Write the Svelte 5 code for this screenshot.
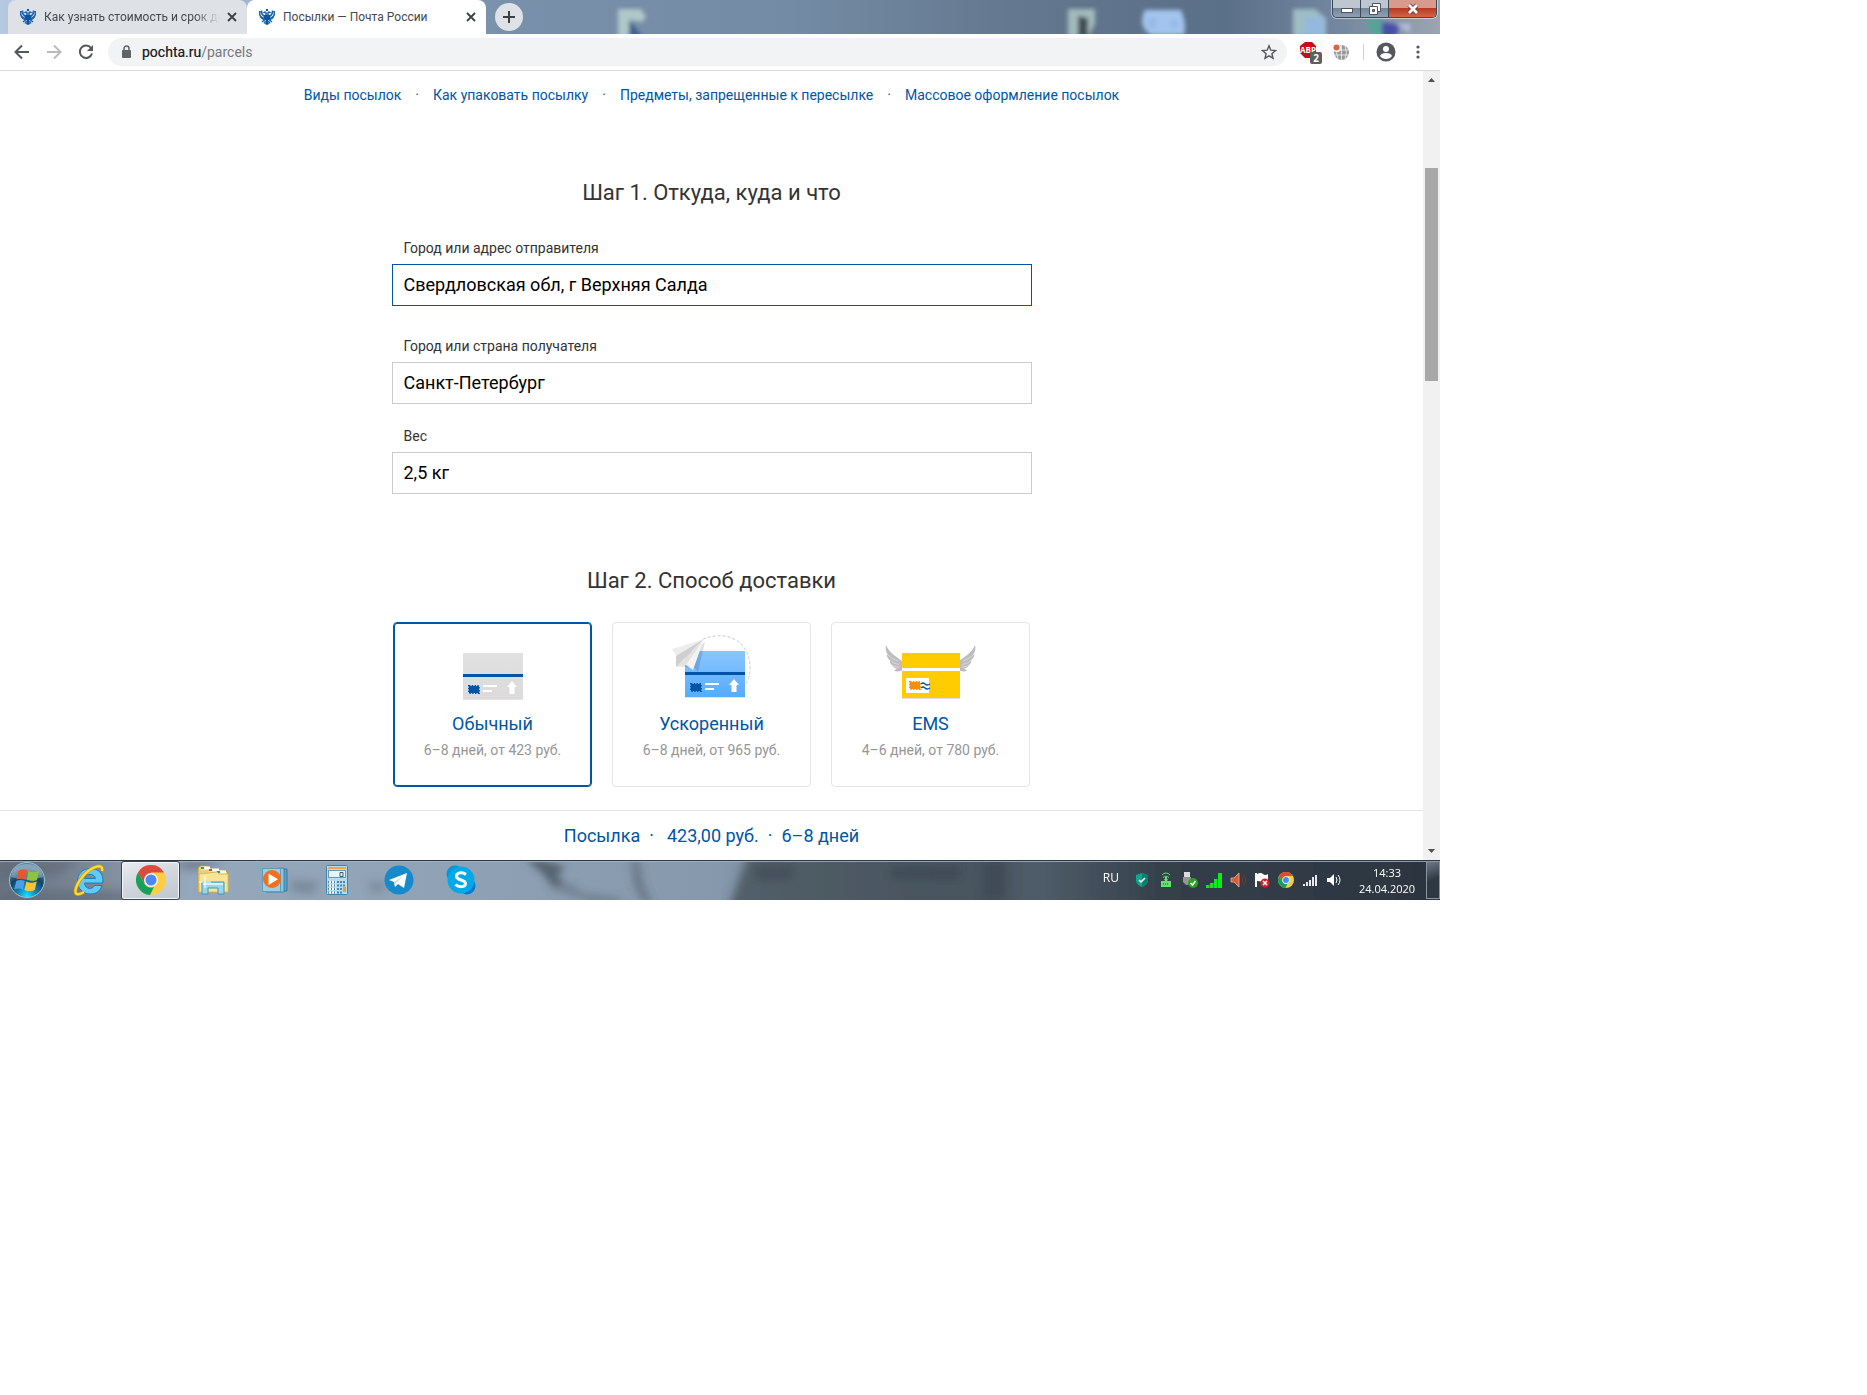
<script lang="ts">
    const links = [
        "Виды посылок",
        "Как упаковать посылку",
        "Предметы, запрещенные к пересылке",
        "Массовое оформление посылок",
    ];

    const methods = [
        { id: "regular", title: "Обычный", terms: "6–8 дней, от 423 руб." },
        { id: "fast", title: "Ускоренный", terms: "6–8 дней, от 965 руб." },
        { id: "ems", title: "EMS", terms: "4–6 дней, от 780 руб." },
    ];

    const apps = ["Internet Explorer", "Chrome", "Проводник", "Проигрыватель", "Калькулятор", "Telegram", "Skype"];
    const tray = ["shield", "modem", "usb", "bars", "sound-off", "flag", "chrome", "signal", "volume"];

    let url = $state("pochta.ru/parcels");
    let from = $state("Свердловская обл, г Верхняя Салда");
    let to = $state("Санкт-Петербург");
    let weight = $state("2,5 кг");
    let method = $state("regular");
</script>

{#snippet eagle()}
    <svg class="favicon" viewBox="0 0 16 16" aria-hidden="true">
        <g fill="none" stroke="#1a63ae">
            <path d="M.7 2v3q.3 3 4.300 4.500M2.500 1.500q-.3 4 3 6M15.300 2v3q-.3 3-4.300 4.500M13.500 1.500q.3 4-3 6" stroke-width="1.600" />
            <path d="M1.500 7.500q1 2.500 4 3.300M14.500 7.500q-1 2.500-4 3.300" stroke-width="1.300" />
            <path d="M4.500 4q2-2 2.500 0v3M11.500 4q-2-2-2.500 0v3" stroke-width="1.600" />
            <path d="M6 10.500L3 13M10 10.500l3 2.500M6.500 12L5 14.500M9.500 12l1.500 2.500" stroke-width="1.400" />
        </g>
        <path d="M7 0h2v2H7zM5 6h6v4L8 12.500 5 10zM7 11.500h2L10 15l-2 1-2-1z" fill="#0a56a5" />
    </svg>
{/snippet}

{#snippet cross()}
    <svg width="10" height="10" viewBox="0 0 10 10" aria-hidden="true">
        <path d="M1 1l8 8M9 1L1 9" stroke="#3c4043" stroke-width="1.800" />
    </svg>
{/snippet}

{#snippet chrome(size: number)}
    <svg width={size} height={size} viewBox="0 0 30 30" aria-hidden="true">
        <circle cx="15" cy="15" r="15" fill="#ffcd41" />
        <path d="M2 7.500A15 15 0 0 1 28 7.500H15L8.500 18.800z" fill="#db4a3f" />
        <path d="M2 7.500L8.500 18.800A7.500 7.500 0 0 0 18 21.900L14 30A15 15 0 0 1 2 7.500z" fill="#17a05d" />
        <circle cx="15" cy="15" r="7" fill="#f1f1f1" />
        <circle cx="15" cy="15" r="5.500" fill="#4a8af4" />
    </svg>
{/snippet}

{#snippet stamp(x: number, y: number, fill: string)}
    <rect {x} {y} width="10" height="7" {fill} />
    <rect {x} {y} width="10" height="7" fill="none" stroke={fill} stroke-width="2" stroke-dasharray="1.400 1.400" />
{/snippet}

{#snippet parcel(x: number, y: number, gradient: string)}
    <rect {x} y={y + 1} width="60" height="46" fill="#000" opacity=".1" />
    <rect {x} {y} width="60" height="46" fill="url(#{gradient})" />
    <rect {x} y={y + 21} width="60" height="3" fill="#0055a6" />
    {@render stamp(x + 6, y + 33, "#0055a6")}
    <path d="M{x + 20} {y + 33}h14M{x + 20} {y + 38}h9" stroke="#fff" stroke-width="2" />
    <path d="M{x + 49} {y + 28}l5 6h-2.500v7h-5v-7H{x + 44}z" fill="#fff" />
{/snippet}

{#snippet wing()}
    <path d="M95 15c1 4 0 7-2 10l1.500-.5c-.5 3-2 5-4.500 6.500h1.500c-.5 2.500-2 4-4 5h1c-1 1.500-2.500 2.300-4.500 2.500l3 2c-2 1.500-5 1-8 0V31c5-4 13-8 16-16z" />
    <path d="M93 25c-3 3-7 5-10 6M90 31c-2 2-5 3-8 3.500M87.500 36c-2 1-4 1-6 1" fill="none" stroke="#e6e6e6" stroke-width=".7" />
{/snippet}

<div class="screen">
    <header class="tabs">
        <svg class="wallpaper" viewBox="0 0 1440 34" preserveAspectRatio="none" aria-hidden="true">
            <defs>
                <linearGradient id="top">
                    <stop offset="0" stop-color="#b5cae1" />
                    <stop offset=".2" stop-color="#9db4d0" />
                    <stop offset=".35" stop-color="#7990ab" />
                    <stop offset=".55" stop-color="#748ba5" />
                    <stop offset=".7" stop-color="#64798f" />
                    <stop offset=".85" stop-color="#5a6f88" />
                    <stop offset=".93" stop-color="#7487a0" />
                    <stop offset="1" stop-color="#9ba5af" />
                </linearGradient>
                <filter id="soft"><feGaussianBlur stdDeviation="2" /></filter>
            </defs>
            <rect width="1440" height="34" fill="url(#top)" />
            <g filter="url(#soft)">
                <path d="M618 9h23l5 8-4 5-12-2v17h-12z" fill="#afc9c9" />
                <path d="M629 20l14 17h-14z" fill="#3d618e" />
                <path d="M1068 9h27v15l-7 13h-20z" fill="#a3babb" />
                <path d="M1078 16l10 2v19h-10z" fill="#3f5053" />
                <path d="M1145 10h36q6 14 3 25h-33q-14-9-6-25z" fill="#a3c4ee" />
                <path d="M1148 18h8v10h-8zM1170 20h8v7h-8z" fill="#96b9e8" />
                <path d="M1293 9h22l11 9v19h-33z" fill="#9fbdc4" />
                <path d="M1305 16h19v21h-19z" fill="#94b9de" />
                <path d="M1365 18h16l6 18h-16z" fill="#59a29b" />
                <path d="M1382 22l18 3-4 12h-14z" fill="#4a50a8" />
                <path d="M1396 24h14v9z" fill="#b7bfe1" />
            </g>
        </svg>
        <button class="tab">
            {@render eagle()}
            <span class="tab-title faded">Как узнать стоимость и срок до</span>
            {@render cross()}
        </button>
        <button class="tab active">
            {@render eagle()}
            <span class="tab-title">Посылки — Почта России</span>
            {@render cross()}
        </button>
        <button class="new-tab" aria-label="Новая вкладка">
            <svg width="14" height="14" viewBox="0 0 14 14" aria-hidden="true">
                <path d="M7 1v12M1 7h12" stroke="#3c4043" stroke-width="2" />
            </svg>
        </button>
        <div class="window-buttons">
            <button aria-label="Свернуть">
                <svg width="12" height="8" viewBox="0 0 12 8" aria-hidden="true">
                    <rect x=".5" y="3.500" width="11" height="4" fill="#fff" stroke="#4d5360" />
                </svg>
            </button>
            <button aria-label="Восстановить">
                <svg width="12" height="12" viewBox="0 0 12 12" aria-hidden="true">
                    <path d="M3.500.5h8v8h-8z" fill="#fff" stroke="#4d5360" />
                    <path d="M.5 3.500h8v8h-8z" fill="#fff" stroke="#4d5360" />
                    <path d="M3.500 6.500h2v2h-2z" fill="#7a8797" stroke="#4d5360" />
                </svg>
            </button>
            <button class="close" aria-label="Закрыть">
                <svg width="14" height="12" viewBox="0 0 14 12" aria-hidden="true">
                    <path d="M3 2l8 8M11 2l-8 8" stroke="#5b3a3a" stroke-width="4.500" />
                    <path d="M3 2l8 8M11 2l-8 8" stroke="#fff" stroke-width="2.800" />
                </svg>
            </button>
        </div>
    </header>

    <div class="toolbar">
        <button class="tool" aria-label="Назад">
            <svg width="16" height="16" viewBox="0 0 16 16" aria-hidden="true">
                <path d="M15 8H2M8 1.500L1.500 8 8 14.500" fill="none" stroke="#54575b" stroke-width="2" />
            </svg>
        </button>
        <button class="tool" aria-label="Вперед">
            <svg width="16" height="16" viewBox="0 0 16 16" aria-hidden="true">
                <path d="M1 8h13M8 1.500L14.500 8 8 14.500" fill="none" stroke="#b9bbbe" stroke-width="2" />
            </svg>
        </button>
        <button class="tool" aria-label="Обновить">
            <svg width="16" height="16" viewBox="0 0 16 16" aria-hidden="true">
                <path d="M13 4A6.200 6.200 0 1 0 14 9.500" fill="none" stroke="#54575b" stroke-width="2" />
                <path d="M15 1v6H9z" fill="#54575b" />
            </svg>
        </button>
        <div class="omnibox">
            <svg width="10" height="14" viewBox="0 0 10 14" aria-hidden="true">
                <rect x="1" y="5" width="9" height="8" rx="1" fill="#5f6368" />
                <path d="M3 5.500V3.500a2.500 2.500 0 0 1 5 0v2" fill="none" stroke="#5f6368" stroke-width="1.500" />
            </svg>
            <div class="url">
                <input aria-label="Адресная строка" bind:value={url} />
                <span aria-hidden="true">pochta.ru</span>
            </div>
            <button aria-label="Добавить в закладки">
                <svg width="16" height="16" viewBox="0 0 16 16" aria-hidden="true">
                    <path d="M8 1.800l1.800 4.400 4.700.4-3.600 3.100 1.100 4.600L8 11.800l-4 2.500 1.100-4.600-3.600-3.100 4.700-.4z" fill="none" stroke="#54575b" stroke-width="1.400" />
                </svg>
            </button>
        </div>
        <button class="extension" aria-label="AdBlock Plus">
            <svg width="24" height="24" viewBox="0 0 24 24" aria-hidden="true">
                <path d="M6 2h7l4 4v7l-4 5H6l-5-5V6z" fill="#c70d17" />
                <text x="9" y="13" text-anchor="middle" font-size="8" font-weight="700" fill="#fff">ABP</text>
                <rect x="11" y="12" width="12" height="12" rx="2" fill="#5e5f61" />
                <text x="17" y="22" text-anchor="middle" font-size="10" font-weight="700" fill="#fff">2</text>
            </svg>
        </button>
        <button class="extension" aria-label="Расширение">
            <svg width="16" height="16" viewBox="0 0 16 16" aria-hidden="true">
                <circle cx="8.500" cy="8.500" r="7.500" fill="#999" />
                <path d="M1 6h15M1 11h15M8.500 1v15M5 2q-3 6.500 0 13M12 2q3 6.500 0 13" stroke="#fff" stroke-width=".7" fill="none" />
                <circle cx="4" cy="4" r="4" fill="#fff" />
                <circle cx="3.500" cy="3.500" r="3" fill="#d9633a" />
            </svg>
        </button>
        <span class="divider"></span>
        <button class="profile" aria-label="Профиль">
            <svg width="20" height="20" viewBox="0 0 20 20" aria-hidden="true">
                <circle cx="10" cy="10" r="9.500" fill="#54575b" />
                <circle cx="10" cy="7" r="3" fill="#fff" />
                <path d="M4 14q1-3 6-3t6 3q-2 3-6 3t-6-3z" fill="#fff" />
            </svg>
        </button>
        <button class="menu" aria-label="Меню">
            <svg width="4" height="14" viewBox="0 0 4 14" fill="#54575b" aria-hidden="true">
                <circle cx="2" cy="2" r="1.600" />
                <circle cx="2" cy="7" r="1.600" />
                <circle cx="2" cy="12" r="1.600" />
            </svg>
        </button>
    </div>

    <div class="viewport">
        <main>
            <nav>
                {#each links as link, i}
                    {#if i > 0}<span>·</span>{/if}
                    <a href="#{i}">{link}</a>
                {/each}
            </nav>

            <section class="form">
                <h2>Шаг 1. Откуда, куда и что</h2>
                <div class="field current">
                    <label for="from">Город или адрес отправителя</label>
                    <input id="from" bind:value={from} />
                </div>
                <div class="field">
                    <label for="to">Город или страна получателя</label>
                    <input id="to" bind:value={to} />
                </div>
                <div class="field">
                    <label for="weight">Вес</label>
                    <input id="weight" bind:value={weight} />
                </div>
            </section>

            <section class="delivery">
                <h2>Шаг 2. Способ доставки</h2>
                <div class="cards">
                    {#each methods as m}
                        <label class="card" class:selected={method === m.id}>
                            <input type="radio" name="method" value={m.id} bind:group={method} />
                            <svg width="101" height="72" viewBox="0 0 101 72" aria-hidden="true">
                                {#if m.id === "regular"}
                                    <defs>
                                        <linearGradient id="gray" x2="0" y2="1">
                                            <stop stop-color="#e1e1e1" />
                                            <stop offset="1" stop-color="#dcdada" />
                                        </linearGradient>
                                    </defs>
                                    {@render parcel(21, 23, "gray")}
                                {:else if m.id === "fast"}
                                    <defs>
                                        <linearGradient id="blue" x2="0" y2="1">
                                            <stop stop-color="#8ac6ff" />
                                            <stop offset="1" stop-color="#55abff" />
                                        </linearGradient>
                                    </defs>
                                    <path d="M42 9C60 2 80 6 87 25q5 16-2 29" fill="none" stroke="#ccc" stroke-dasharray="3 2" />
                                    {@render parcel(24, 21, "blue")}
                                    <path d="M15 36l19 2 3 4 7-30z" fill="#000" opacity=".12" />
                                    <path d="M11 19L43 9 16 27z" fill="#ededed" />
                                    <path d="M43 9L15 26v11z" fill="#cfcfcf" />
                                    <path d="M43 9L15 37l11-2z" fill="#e3e3e3" />
                                    <path d="M43 9L25 35l7 5z" fill="#f3f3f3" />
                                {:else}
                                    <g fill="#bdbdbd">
                                        {@render wing()}
                                        <g transform="translate(101 0) scale(-1 1)">{@render wing()}</g>
                                    </g>
                                    <rect x="22" y="24" width="58" height="45" fill="#000" opacity=".12" />
                                    <rect x="22" y="23" width="58" height="45" fill="#ffcc02" />
                                    <rect x="22" y="38" width="58" height="3" fill="#fff" />
                                    <rect x="26" y="48" width="23" height="15" fill="#fff" />
                                    {@render stamp(30, 52, "#f78d12")}
                                    <path d="M41 54q2-2 4 0t5 0M41 58q2-2 4 0t5 0" fill="none" stroke="#0055a6" stroke-width="1.300" />
                                {/if}
                            </svg>
                            <span class="title">{m.title}</span>
                            <span class="terms">{m.terms}</span>
                        </label>
                    {/each}
                </div>
            </section>

            <div class="summary">
                <span>Посылка</span><span>·</span><span class="price">423,00 руб.</span><span>·</span><span>6–8 дней</span>
            </div>
        </main>

        <div class="scrollbar">
            <svg width="7" height="4" viewBox="0 0 7 4" aria-hidden="true"><path d="M0 4l3.500-4L7 4z" fill="#505050" /></svg>
            <div class="track"><div class="thumb"></div></div>
            <svg width="7" height="4" viewBox="0 0 7 4" aria-hidden="true"><path d="M0 0l3.500 4L7 0z" fill="#505050" /></svg>
        </div>
    </div>

    <footer class="taskbar">
        <svg class="wallpaper" viewBox="0 0 1440 40" preserveAspectRatio="none" aria-hidden="true">
            <defs>
                <linearGradient id="bottom">
                    <stop offset="0" stop-color="#6a7482" />
                    <stop offset=".07" stop-color="#7e8b9b" />
                    <stop offset=".13" stop-color="#95a7bb" />
                    <stop offset=".28" stop-color="#91a3b7" />
                    <stop offset=".5" stop-color="#8598ac" />
                    <stop offset=".52" stop-color="#7e92a6" />
                </linearGradient>
                <linearGradient id="dark">
                    <stop offset="0" stop-color="#525f68" />
                    <stop offset=".35" stop-color="#47535e" />
                    <stop offset=".42" stop-color="#4f5d69" />
                    <stop offset=".6" stop-color="#343f4a" />
                    <stop offset="1" stop-color="#2b343f" />
                </linearGradient>
                <filter id="haze" x="-20%" y="-60%" width="140%" height="220%"><feGaussianBlur stdDeviation="5 4" /></filter>
                <filter id="branch" x="-20%" y="-60%" width="140%" height="220%"><feGaussianBlur stdDeviation="4 3" /></filter>
            </defs>
            <rect width="1440" height="40" fill="url(#bottom)" />
            <g filter="url(#haze)">
                <path d="M0 0h80l-20 14-60 8zM180 0h44l-20 10h-24zM0 30h150v16H0z" fill="#5d6875" opacity=".6" />
                <path d="M290 20l30 2-8 12-20-2zM370 20l20 6-18 8z" fill="#5f6d7c" opacity=".5" />
                <path d="M750-10h710v60H728z" fill="url(#dark)" />
                <path d="M755 6h40l-5 14h-34zM890 6h70v14h-70zM985 0h22v40h-22z" fill="#333e49" opacity=".4" />
            </g>
            <g filter="url(#branch)" fill="#4a5560">
                <path d="M526 0h16l22 6-6 10 6 8-12 1-12-14z" opacity=".8" />
                <path d="M550 20l24 4 8 8 34 4 10 8h-30l-46-14z" opacity=".3" />
                <path d="M632 0h7l3 22 9 20h-8l-9-18z" opacity=".55" />
            </g>
            <path d="M0 .5h1440" stroke="#2e3843" />
            <path d="M0 1.500h1440" stroke="#a3b8cc" opacity=".8" />
        </svg>

        <button class="start" aria-label="Пуск">
            <svg width="38" height="38" viewBox="0 0 38 38" aria-hidden="true">
                <defs>
                    <radialGradient id="orb" cy=".95" r=".8">
                        <stop offset="0" stop-color="#1ce0ff" />
                        <stop offset=".35" stop-color="#1483b4" />
                        <stop offset=".7" stop-color="#124266" />
                        <stop offset="1" stop-color="#557d9c" />
                    </radialGradient>
                </defs>
                <circle cx="19" cy="19" r="17.500" fill="url(#orb)" stroke="#9fc4d6" />
                <path d="M3 16Q5 3 19 3t16 13q-16 5-32 0z" fill="#fff" opacity=".3" />
                <path d="M10.500 10q4-2.500 8.500-.5l-1.800 9q-4-2-8.700 0z" fill="#e9562a" />
                <path d="M20.500 10q5 2.500 10.500 0l-2 9q-5 2-10.300-.2z" fill="#8cc63e" />
                <path d="M8.200 20q4.500-2 8.700 0l-2 8.500q-4-2-8.700 0z" fill="#4c9fe0" />
                <path d="M18.400 20.500q5 2.500 10.300 0l-2 8.500q-5 2.500-10.300 0z" fill="#fcc430" />
            </svg>
        </button>

        <div class="apps">
            {#each apps as app}
                <button class:running={app === "Chrome"} aria-label={app}>
                    {#if app === "Internet Explorer"}
                        <svg width="32" height="32" viewBox="0 0 32 32" aria-hidden="true">
                            <path d="M29 21.500h-7.500c-2 4.500-9.500 4-10-2.500h18.300C31 9 25 4.500 17.500 4.500 9 4.500 4.500 10.500 4.500 17.500S10 30 17.500 30c6 0 10-3.500 11.500-8.500zM11.500 14.500c1-5.500 10-5.500 11 0z" fill="#62cbf5" stroke="#1d7eb8" fill-rule="evenodd" />
                            <path d="M29 7c2-8-9-5-17 3S0 29 4 30q2 1 7-2" fill="none" stroke="#d39c10" stroke-width="3.500" />
                            <path d="M29 7c2-8-9-5-17 3S0 29 4 30q2 1 7-2" fill="none" stroke="#ffdf3c" stroke-width="2" />
                        </svg>
                    {:else if app === "Chrome"}
                        {@render chrome(30)}
                    {:else if app === "Проводник"}
                        <svg width="32" height="30" viewBox="0 0 32 30" aria-hidden="true">
                            <path d="M1 3l2-2h8l1 3 6 1h10l3 3v19H1z" fill="#e8cf7d" stroke="#b89a49" />
                            <path d="M4 3h9M12 5h10M20 7h9" stroke="#fff" stroke-width="3" />
                            <path d="M4 3h3" stroke="#28a62c" stroke-width="2" />
                            <path d="M12 5h3" stroke="#d4402b" stroke-width="2" />
                            <path d="M20 7h3" stroke="#2585d3" stroke-width="2" />
                            <path d="M2 9l18-2 2 2h9v18H2z" fill="#f7e595" stroke="#d5bc63" />
                            <path d="M5 29V17h22v12h-6v-6H11v6z" fill="#9bd5ec" stroke="#4795b8" />
                            <path d="M6 18h20v2H6z" fill="#d7f2fb" />
                            <path d="M8 11v12M2 17h12" stroke="#fff" />
                        </svg>
                    {:else if app === "Проигрыватель"}
                        <svg width="27" height="26" viewBox="0 0 27 26" aria-hidden="true">
                            <path d="M9 3l17-1v22H9z" fill="#5b9fc6" stroke="#377a9f" />
                            <path d="M5 2l18-1v24H5z" fill="#8ec5df" stroke="#4382a7" />
                            <rect x="1.500" y="1.500" width="18" height="23" fill="#9fcde4" stroke="#5f9dbd" />
                            <circle cx="11" cy="12" r="9" fill="#f0701c" />
                            <path d="M7.500 6.500v11.500l9.500-5.800z" fill="#fff" />
                        </svg>
                    {:else if app === "Калькулятор"}
                        <svg width="24" height="30" viewBox="0 0 24 30" aria-hidden="true">
                            <rect x="1.500" y=".5" width="21" height="29" rx="1" fill="#b7dcf0" stroke="#4382a8" />
                            <rect x="3" y="2" width="18" height="2" fill="#f4a444" />
                            <rect x="3.500" y="5.500" width="17" height="7" fill="#e6f5fb" stroke="#6a9ab5" />
                            <path d="M15 7.500h3v4h-3z" fill="none" stroke="#345a72" />
                            <path d="M3 17h18M3 20.500h18M3 24h18M3 27.500h14" stroke="#4c87a8" stroke-width="2" stroke-dasharray="2 1" />
                            <path d="M4 17h7M4 20.500h7M4 24h7M4 27.500h7" stroke="#fff" stroke-width="2" stroke-dasharray="2 1" />
                            <rect x="18" y="22" width="3" height="5" fill="#f09a2a" />
                        </svg>
                    {:else if app === "Telegram"}
                        <svg width="30" height="30" viewBox="0 0 30 30" aria-hidden="true">
                            <circle cx="15" cy="15" r="14.500" fill="#178acb" />
                            <path d="M5 15l18-7-3 15-6-4-3 3-1-5z" fill="#fff" />
                            <path d="M10 17l9-6-7 7-1 4z" fill="#c5d8e5" />
                        </svg>
                    {:else}
                        <svg width="30" height="30" viewBox="0 0 30 30" aria-hidden="true">
                            <circle cx="9" cy="9" r="8.500" fill="#0795dc" />
                            <circle cx="21" cy="21" r="8.500" fill="#0078d4" />
                            <circle cx="15" cy="15" r="13.500" fill="#00a9ea" />
                            <path d="M20 9.500C17 7 10 7 10.500 11.500c.5 4.500 9 2.500 9 7 0 4-7 4-10 1" fill="none" stroke="#fff" stroke-width="3" />
                        </svg>
                    {/if}
                </button>
            {/each}
        </div>

        <div class="tray">
            <span class="lang">RU</span>
            {#each tray as icon}
                {#if icon === "chrome"}
                    {@render chrome(16)}
                {:else}
                    <svg width="16" height="16" viewBox="0 0 16 16" aria-hidden="true">
                        {#if icon === "shield"}
                            <path d="M8 1l6 2v6q-1 4-6 6-5-2-6-6V3z" fill="#12a58c" />
                            <path d="M8 1l6 2v6q-1 4-6 6z" fill="#078272" />
                            <path d="M5 8l2 2 4-4" fill="none" stroke="#fff" stroke-width="1.500" />
                        {:else if icon === "modem"}
                            <path d="M3 9h10v6H3zM7 5h2v4H7z" fill="#62e26c" />
                            <path d="M4 3q4-4 8 0M5 5.500q3-3 6 0M6 8q2-2 4 0" fill="none" stroke="#62e26c" />
                            <path d="M5 12h6" stroke="#255d35" stroke-dasharray="1 1" />
                        {:else if icon === "usb"}
                            <path d="M2 0h6v5H2z" fill="#ddd" />
                            <path d="M1 5h8v5l-3 3H4L1 10z" fill="#969696" />
                            <circle cx="11" cy="11" r="5" fill="#2aa322" />
                            <path d="M8.500 11l2 2 3-4" fill="none" stroke="#fff" stroke-width="1.500" />
                        {:else if icon === "bars"}
                            <path d="M0 13h3v3H0zM4 11h3v5H4zM8 7h3v9H8zM12 1h4v15h-4z" fill="#0bed16" />
                        {:else if icon === "sound-off"}
                            <path d="M1 6h3l5-5v14l-5-5H1z" fill="#dc5a35" stroke="#e8b7a4" stroke-width=".8" />
                            <path d="M11.500 5q3 3 0 6M13.500 3q4 5 0 10" fill="none" stroke="#713b34" />
                        {:else if icon === "flag"}
                            <path d="M2 1v14" stroke="#fff" stroke-width="2" />
                            <path d="M3 2q4-2 6 0t5 0v8q-4 1-6 0T3 9z" fill="#fff" />
                            <circle cx="11" cy="11" r="4.500" fill="#d2232a" />
                            <path d="M9 9l4 4M13 9l-4 4" stroke="#fff" stroke-width="1.500" />
                        {:else if icon === "signal"}
                            <path d="M1 12h2v2H1zM4 10h2v4H4zM7 8h2v6H7zM10 5h2v9h-2zM13 3h2v11h-2z" fill="#e6eaee" />
                        {:else}
                            <path d="M1 6h3l4-4v12l-4-4H1z" fill="#fff" />
                            <path d="M10 5q2 3 0 6M12 3q4 5 0 10" fill="none" stroke="#fff" />
                        {/if}
                    </svg>
                {/if}
            {/each}
            <time datetime="2020-04-24T14:33">14:33<br />24.04.2020</time>
        </div>
        <button class="show-desktop" aria-label="Свернуть все окна"></button>
    </footer>
</div>

<style>
    :global(body) {
        margin: 0;
        background: #fff;
    }

    .screen {
        max-width: 1440px;
        font-family: Roboto, "Liberation Sans", sans-serif;
        color: #333;
    }

    button {
        display: flex;
        align-items: center;
        justify-content: center;
        margin: 0;
        padding: 0;
        border: 0;
        background: none;
        cursor: pointer;
    }

    svg {
        display: block;
        flex-shrink: 0;
    }

    .wallpaper {
        position: absolute;
        inset: 0;
        width: 100%;
        height: 100%;
        z-index: -1;
    }

    /* Tab strip */
    .tabs {
        position: relative;
        z-index: 0;
        display: flex;
        align-items: center;
        height: 34px;
        padding-left: 8px;
    }

    .tab {
        width: 239px;
        height: 34px;
        padding: 0 10px 0 12px;
        gap: 8px;
        border-radius: 8px 8px 0 0;
        background: #dee1e6;
        font: 12px Roboto, sans-serif;
        color: #45494d;
    }

    .tab.active {
        background: #fff;
    }

    .favicon {
        width: 16px;
        height: 16px;
    }

    .tab-title {
        flex: 1;
        min-width: 0;
        text-align: left;
        white-space: nowrap;
    }

    .faded {
        mask-image: linear-gradient(90deg, #000 86%, transparent);
    }

    .new-tab {
        width: 28px;
        height: 28px;
        margin-left: 9px;
        border-radius: 50%;
        background: #dee1e6;
    }

    .window-buttons {
        display: flex;
        align-self: flex-start;
        margin: 0 3px 0 auto;
        border: 1px solid #3d4653;
        border-top: 0;
        border-radius: 0 0 5px 5px;
        box-shadow: 0 0 0 1px rgba(255, 255, 255, 0.5);
        overflow: hidden;
    }

    .window-buttons button {
        width: 28px;
        height: 17px;
        box-sizing: border-box;
        border-right: 1px solid #3d4653;
        background: linear-gradient(#bec6d0 45%, #75859a 50%, #8fa0b4);
    }

    .window-buttons .close {
        width: 47px;
        border-right: 0;
        background: linear-gradient(#d99a8e 45%, #b93922 50%, #d0664b);
    }

    /* Address bar */
    .toolbar {
        display: flex;
        align-items: center;
        height: 36px;
        padding: 0 12px 0 6px;
        border-bottom: 1px solid #d9dadc;
        background: #fff;
    }

    .tool {
        width: 32px;
        height: 28px;
    }

    .omnibox {
        display: flex;
        flex: 1;
        align-items: center;
        height: 28px;
        margin: 0 9px 0 6px;
        padding: 0 10px 0 13px;
        border-radius: 14px;
        background: #f1f3f4;
    }

    .url {
        position: relative;
        flex: 1;
        margin-left: 11px;
        font: 14px/20px Roboto, sans-serif;
    }

    .url input {
        display: block;
        width: 100%;
        padding: 0;
        border: 0;
        outline: 0;
        background: none;
        font: inherit;
        color: #75797e;
    }

    /* the host name is drawn darker over the address */
    .url span {
        position: absolute;
        left: 0;
        top: 0;
        color: #202124;
        pointer-events: none;
    }

    .extension {
        width: 30px;
        height: 28px;
    }

    .extension text {
        font-family: "Open Sans", sans-serif;
    }

    .divider {
        width: 1px;
        height: 16px;
        margin: 0 12px 0 7px;
        background: #cfd1d4;
    }

    .menu {
        width: 20px;
        margin-left: 12px;
    }

    /* Page */
    .viewport {
        display: flex;
        background: #fff;
    }

    main {
        flex: 1;
        min-width: 0;
    }

    nav {
        display: flex;
        flex-wrap: wrap;
        justify-content: center;
        gap: 14px;
        padding-top: 14px;
        font-size: 14px;
        line-height: 20px;
        color: #0055a6;
    }

    a {
        color: #0055a6;
        text-decoration: none;
    }

    h2 {
        margin: 0;
        padding-top: 2px;
        font-size: 22px;
        font-weight: 400;
        line-height: 26px;
        text-align: center;
    }

    .form {
        display: flex;
        flex-direction: column;
        gap: 22px;
        max-width: 640px;
        margin: 0 auto;
        padding: 73px 0 72px;
    }

    .form h2 {
        margin-bottom: 10px;
    }

    .field {
        display: flex;
        flex-direction: column;
        gap: 6px;
    }

    .field label {
        padding-left: 12px;
        font-size: 14px;
        line-height: 20px;
    }

    .field input {
        height: 42px;
        box-sizing: border-box;
        padding: 0 11px 2px;
        border: 1px solid #ccc;
        border-radius: 0;
        background: #fff;
        font-family: inherit;
        font-size: 18px;
        color: #000;
    }

    .field.current {
        margin-bottom: 8px;
    }

    .field.current input {
        border-color: #0055a6;
    }

    .delivery {
        max-width: 637px;
        margin: 0 auto;
        padding-bottom: 23px;
    }

    .cards {
        display: flex;
        gap: 20px;
        margin-top: 28px;
    }

    .card {
        flex: 1;
        display: flex;
        flex-direction: column;
        align-items: center;
        padding: 7px 0 26px;
        border: 1px solid #e5e5e5;
        border-radius: 4px;
        cursor: pointer;
    }

    .card.selected {
        border-color: #0055a6;
        box-shadow: inset 0 0 0 1px #0055a6;
    }

    .card input {
        position: absolute;
        opacity: 0;
    }

    .title {
        margin: 10px 0 4px;
        font-size: 18px;
        line-height: 24px;
        color: #0055a6;
    }

    .terms {
        font-size: 14px;
        line-height: 20px;
        color: #969696;
    }

    .summary {
        display: flex;
        justify-content: center;
        gap: 9px;
        padding: 13px 0 12px;
        border-top: 1px solid #e5e5e5;
        font-size: 18px;
        line-height: 24px;
        color: #0055a6;
    }

    .price {
        margin-left: 4px;
    }

    .scrollbar {
        display: flex;
        flex-direction: column;
        align-items: center;
        width: 17px;
        box-sizing: border-box;
        padding: 7px 0;
        background: #f1f1f1;
    }

    .track {
        flex: 1;
        display: flex;
        flex-direction: column;
        width: 13px;
        padding: 86px 0 0;
        box-sizing: border-box;
    }

    .thumb {
        height: 213px;
        background: #a8a8a8;
    }

    /* Taskbar */
    .taskbar {
        position: relative;
        z-index: 0;
        display: flex;
        align-items: center;
        height: 40px;
    }

    .start {
        width: 54px;
        margin-right: 5px;
    }

    .apps {
        display: flex;
        gap: 3px;
    }

    .apps button {
        width: 59px;
        height: 39px;
        box-sizing: border-box;
    }

    .apps .running {
        border: 1px solid #39424d;
        border-radius: 3px;
        background: linear-gradient(160deg, #e9ecef, #d0d6dc 50%, #bdc6cf);
        box-shadow: inset 0 0 0 1px #f5f7f9;
    }

    .tray {
        display: flex;
        align-items: center;
        gap: 8px;
        margin-left: auto;
        color: #fff;
        font: 12px/16px "Open Sans", sans-serif;
    }

    .lang {
        margin: 0 7px 4px 0;
    }

    time {
        width: 66px;
        padding-top: 2px;
        margin: 0 6px 0 4px;
        font-size: 11px;
        text-align: center;
    }

    .show-desktop {
        width: 14px;
        height: 38px;
        border: 1px solid #8b959f;
        background: linear-gradient(160deg, #6e7a86, #2e3843 50%);
    }
</style>
